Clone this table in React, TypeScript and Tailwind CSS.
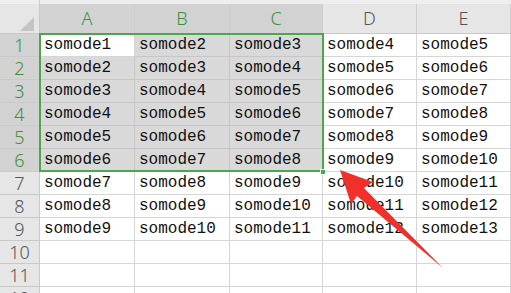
const COLS = ['A', 'B', 'C', 'D', 'E']
const ROWS = Array.from({ length: 12 }, (_, i) => i + 1)

// selection covers A1:C6, active cell A1
const inSel = (r: number, c: number) => r <= 6 && c <= 2

function Arrow() {
  return (
    <svg className="absolute inset-0 pointer-events-none" width="511" height="293" viewBox="0 0 511 293">
      <polygon
        points="340,170 351,204 357,196 443,268 364,188 373,182"
        fill="#f2302b"
      />
    </svg>
  )
}

export default function App() {
  return (
    <div
      className="relative w-[511px] h-[293px] overflow-hidden bg-white"
      style={{ fontFamily: '"Liberation Mono", monospace' }}
    >
      <div className="grid grid-cols-[40px_95px_95px_93px_94px_94px] grid-rows-[34px_repeat(12,23px)]">
        {/* corner */}
        <div className="bg-[#e6e6e6] border-r border-b border-[#c9c9c9] flex flex-col">
          <div className="h-[4px] bg-[#eeeeee]" />
          <div className="flex-1 relative">
            <div className="absolute left-[20px] top-[13px] w-0 h-0 border-l-[14px] border-l-transparent border-b-[14px] border-b-[#c4c4c4]" />
          </div>
        </div>
        {COLS.map((c, i) => (
          <div key={c} className="flex flex-col border-b border-[#c9c9c9]">
            <div className="h-[4px] bg-[#eeeeee]" />
            <div
              className={`flex-1 flex items-center justify-center border-r border-[#cfcfcf] text-[18px] ${
                i <= 2 ? 'bg-[#d2d2d2] text-[#3f8f3f]' : 'bg-[#e6e6e6] text-[#555555]'
              }`}
              style={{ fontFamily: '"Noto Sans", sans-serif', fontWeight: 300 }}
            >
              {c}
            </div>
          </div>
        ))}
        {ROWS.map((r) => (
          <div key={r} className="contents">
            <div
              className={`flex items-center justify-center border-b border-r border-[#c9c9c9] text-[18px] ${
                r <= 6 ? 'bg-[#d2d2d2] text-[#3f8f3f]' : 'bg-[#e6e6e6] text-[#555555]'
              }`}
              style={{ fontFamily: '"Noto Sans", sans-serif', fontWeight: 300 }}
            >
              {r}
            </div>
            {COLS.map((c, ci) => {
              const sel = inSel(r, ci)
              const active = r === 1 && ci === 0
              return (
                <div
                  key={c}
                  className={`flex items-center pl-[4px] border-b border-r text-[16px] text-[#111111] whitespace-nowrap overflow-hidden ${
                    sel && !active ? 'bg-[#d9d9d9] border-[#c6c6c6]' : 'bg-white border-[#d6d6d6]'
                  }`}
                >
                  {r <= 9 ? `somode${r + ci}` : ''}
                </div>
              )
            })}
          </div>
        ))}
      </div>

      {/* selection frame + fill handle */}
      <div className="absolute left-[39px] top-[33px] w-[285px] h-[139px] border-2 border-[#4ca64c]" />
      <div className="absolute left-[320px] top-[169px] w-[6px] h-[6px] bg-[#4ca64c] border border-white" />

      <Arrow />
    </div>
  )
}
